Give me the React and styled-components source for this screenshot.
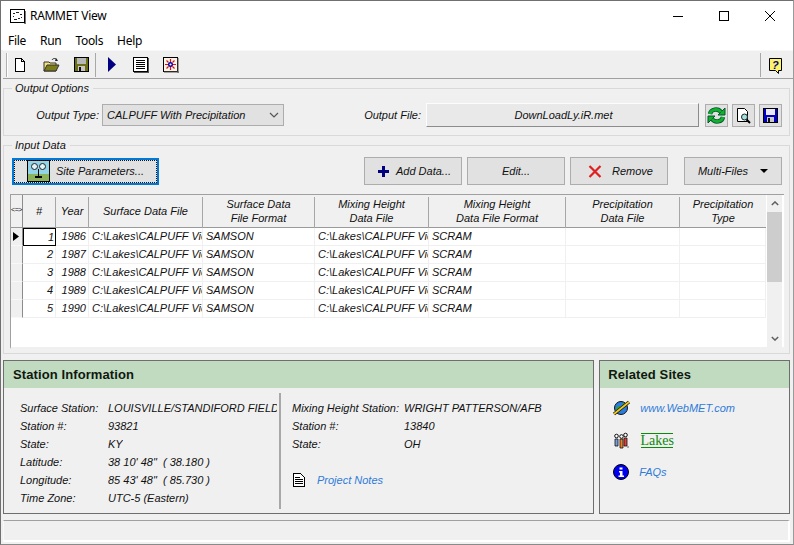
import React from 'react'
import styled, { createGlobalStyle } from 'styled-components'

const GlobalStyle = createGlobalStyle`
  html, body { margin: 0; padding: 0; background: #f0f0f0; }
  * { box-sizing: border-box; }
`

const Window = styled.div`
  width: 794px;
  height: 545px;
  display: flex;
  flex-direction: column;
  overflow: hidden;
  background: #f0f0f0;
  border: 1px solid #707070;
  border-right-color: #9a9a9a;
  border-bottom-color: #8a8a8a;
  font: italic 11px 'Liberation Sans', Arial, sans-serif;
  color: #111;
`

const TitleBar = styled.div`
  height: 30px;
  flex: none;
  display: flex;
  align-items: center;
  padding-left: 8px;
  background: #fff;
  font: normal 12px 'Noto Sans', sans-serif;
  letter-spacing: -0.3px;
  color: #000;
`

const TitleText = styled.span`
  margin: -2px 0 0 4px;
`

const WindowButtons = styled.div`
  margin-left: auto;
  display: flex;
  align-items: center;
`

const WindowButton = styled.div`
  width: 46px;
  height: 30px;
  display: flex;
  align-items: center;
  justify-content: center;
`

const MenuBar = styled.div`
  height: 19px;
  flex: none;
  display: flex;
  gap: 14px;
  padding-left: 7px;
  align-items: center;
  background: #fff;
  font: normal 12px 'Noto Sans', sans-serif;
  letter-spacing: -0.3px;
  color: #000;
`

const Toolbar = styled.div`
  height: 29px;
  flex: none;
  display: flex;
  align-items: center;
  margin-left: 2px;
  padding-top: 1px;
  background: #efefef;
  border-top: 1px solid #f8f8f8;
  border-bottom: 1px solid #a0a0a0;
`

const Grip = styled.div`
  width: 2px;
  height: 24px;
  margin: 0 4px 0 3px;
  background: #fff;
  border-left: 1px solid #b0b0b0;
`

const ToolIcon = styled.div`
  width: 16px;
  height: 16px;
  margin-right: ${p => p.$gap}px;
  display: flex;
`

const ToolSep = styled.div`
  width: 1px;
  height: 24px;
  flex: none;
  margin: 0 ${p => p.$after}px 0 ${p => (p.$push ? 'auto' : '5px')};
  background: #a8a8a8;
`

const Content = styled.div`
  flex: 1;
  display: flex;
  flex-direction: column;
  padding: 2px 3px 0 2px;
  min-height: 0;
`

const Group = styled.fieldset`
  margin: ${p => p.$top}px 0 0;
  padding: ${p => p.$pad};
  height: ${p => p.$h}px;
  flex: none;
  border: 1px solid #d9d9d9;
  min-width: 0;
`

const Legend = styled.legend`
  margin-left: 8px;
  padding: 0 4px 0 3px;
  font-size: 11px;
  line-height: 14px;
`

const OptionsRow = styled.div`
  display: flex;
  align-items: center;
  height: 24px;
`

const FieldLabel = styled.span`
  width: ${p => p.$w}px;
  margin-right: ${p => p.$gap}px;
  text-align: right;
  white-space: nowrap;
  flex: none;
`

const Select = styled.div`
  width: 182px;
  height: 22px;
  display: flex;
  align-items: center;
  justify-content: space-between;
  padding: 0 4px;
  margin-right: 80px;
  background: #e1e1e1;
  border: 1px solid #adadad;
  flex: none;
`

const FileField = styled.div`
  width: 273px;
  height: 24px;
  margin-right: 6px;
  padding-left: 2px;
  display: flex;
  align-items: center;
  justify-content: center;
  background: #e9e9e9;
  border: 1px solid;
  border-color: #fcfcfc #8c8c8c #8c8c8c #fcfcfc;
  flex: none;
`

const SquareButtons = styled.div`
  display: flex;
  gap: 4px;
`

const SquareButton = styled.div`
  width: 23px;
  height: 23px;
  display: flex;
  align-items: center;
  justify-content: center;
  background: #e1e1e1;
  border: 1px solid #adadad;
`

const ActionRow = styled.div`
  display: flex;
  align-items: center;
  height: 28px;
  padding-left: 8px;
`

const SiteButton = styled.div`
  width: 147px;
  height: 27px;
  margin-right: 205px;
  display: flex;
  align-items: center;
  padding-left: 13px;
  gap: 6px;
  background: #e1e1e1;
  border: 2px solid #0078d7;
  outline: 1px dotted #111;
  outline-offset: -3px;
`

const ActionButton = styled.div`
  width: 98px;
  height: 28px;
  margin-left: ${p => p.$left}px;
  padding-left: ${p => p.$shift || 0}px;
  display: flex;
  align-items: center;
  justify-content: center;
  gap: ${p => p.$gap || 0}px;
  background: #e1e1e1;
  border: 1px solid #adadad;
  white-space: nowrap;
`

const Table = styled.div`
  width: 774px;
  height: 155px;
  margin: 9px 0 0 6px;
  display: flex;
  background: #fff;
  border-top: 1px solid #a0a0a0;
  border-left: 1px solid #a0a0a0;
  border-bottom: 2px solid #f0f0f0;
`

const TableBody = styled.div`
  flex: 1;
  min-width: 0;
`

const colTemplate = '12px 33px 33px 114px 112px 114px 137px 114px 86px'

const HeaderRow = styled.div`
  display: grid;
  grid-template-columns: ${colTemplate};
  height: 33px;
  background: #f0f0f0;
  border-bottom: 1px solid #9a9a9a;
`

const HeaderCell = styled.div`
  display: flex;
  align-items: center;
  justify-content: center;
  text-align: center;
  line-height: 14px;
  padding-bottom: 3px;
  border-right: ${p => (p.$plain ? 'none' : '1px solid #a6a6a6')};
  margin: 2px 0 0;
`

const CornerCell = styled(HeaderCell)`
  margin: 0;
  border-right: 1px solid #8c8c8c;
  font-style: normal;
  font-size: 7px;
  letter-spacing: -0.5px;
  white-space: nowrap;
`

const DataRow = styled.div`
  display: grid;
  grid-template-columns: ${colTemplate};
  height: 18px;
`

const RowHead = styled.div`
  background: #f0f0f0;
  border-right: 1px solid #8c8c8c;
  border-bottom: 1px solid #f8f8f8;
  display: flex;
  align-items: center;
  padding-left: 2px;
`

const Cell = styled.div`
  overflow: hidden;
  white-space: nowrap;
  line-height: 17px;
  padding: 0 ${p => (p.$right ? '2px' : '0')} 0 ${p => (p.$right ? '0' : '3px')};
  text-align: ${p => (p.$right ? 'right' : 'left')};
  border-right: 1px solid #f0f0f0;
  border-bottom: 1px solid #f0f0f0;
`

const FocusCell = styled(Cell)`
  border: 1px solid #000;
  line-height: 16px;
  padding-right: 1px;
`

const ScrollBar = styled.div`
  width: 15px;
  margin: 0 2px 0 1px;
  display: flex;
  flex-direction: column;
  background: #f0f0f0;
`

const ScrollArrow = styled.div`
  height: 17px;
  flex: none;
  display: flex;
  align-items: center;
  justify-content: center;
`

const ScrollTrack = styled.div`
  flex: 1;
`

const ScrollThumb = styled.div`
  height: 70px;
  background: #cdcdcd;
`

const Panels = styled.div`
  display: flex;
  gap: 5px;
  margin-top: 6px;
  flex: none;
`

const Panel = styled.div`
  width: ${p => p.$w}px;
  height: 154px;
  display: flex;
  flex-direction: column;
  background: #f0f0f0;
  border: 1px solid #6e6e6e;
`

const PanelHeader = styled.div`
  height: 27px;
  flex: none;
  display: flex;
  align-items: center;
  padding: 0 0 1px ${p => p.$left}px;
  background: #c1dbc1;
  font: bold 13px 'Liberation Sans', Arial, sans-serif;
  letter-spacing: 0.1px;
  color: #10180f;
`

const StationBody = styled.div`
  flex: 1;
  display: flex;
  padding: 5px 0 4px;
`

const StationColumn = styled.div`
  width: ${p => p.$w}px;
  flex: none;
  overflow: hidden;
  padding: 6px 2px 0 ${p => p.$left}px;
  border-right: ${p => (p.$divider ? '2px solid #a8a8a8' : 'none')};
`

const InfoRow = styled.div`
  display: flex;
  height: 18px;
  line-height: 18px;
  white-space: nowrap;
`

const InfoLabel = styled.span`
  width: ${p => p.$w}px;
  flex: none;
`

const InfoValue = styled.span`
  overflow: hidden;
`

const NotesRow = styled.div`
  display: flex;
  align-items: center;
  height: 18px;
  margin-top: 18px;
  gap: 11px;
`

const LinkText = styled.span`
  color: #2f7bd9;
`

const SitesList = styled.div`
  display: flex;
  flex-direction: column;
  padding: 11px 0 0 13px;
`

const SiteRow = styled.div`
  display: flex;
  align-items: center;
  height: 18px;
  gap: 10px;
  margin-bottom: ${p => p.$after}px;
`

const LakesLogo = styled.span`
  width: 32px;
  height: 15px;
  margin-left: 1px;
  display: flex;
  align-items: center;
  justify-content: center;
  border-top: 1px solid #0b8a0b;
  border-bottom: 1px solid #0b8a0b;
  font: normal 14px 'Liberation Serif', serif;
  line-height: 13px;
  color: #0b8a0b;
`

const StatusBar = styled.div`
  height: 22px;
  flex: none;
  margin-top: 6px;
  background: #f0f0f0;
  border: 1px solid;
  border-color: #a0a0a0 #fff #fff #f8f8f8;
  border-width: 1px 2px 2px 1px;
`

const AppIcon = () => (
  <svg width="17" height="16" viewBox="0 0 17 16" shapeRendering="crispEdges">
    <rect x="1.5" y="1.5" width="14" height="13" fill="#fff" stroke="#000" />
    <path d="M15 15h2M16 3v12" stroke="#777" />
    <path d="M4 5h2M7 4h3M11 6h2M4 8h1M12 9h1M5 11h3M9 10h2" stroke="#222" />
  </svg>
)

const NewIcon = () => (
  <svg width="16" height="16" viewBox="0 0 16 16" shapeRendering="crispEdges">
    <path d="M3.5 1.5h6l3 3v10h-9z" fill="#fff" stroke="#000" />
    <path d="M9.5 1.5v3h3" fill="none" stroke="#000" />
  </svg>
)

const OpenIcon = () => (
  <svg width="17" height="16" viewBox="0 0 17 16" style={{ overflow: 'visible' }}>
    <path d="M1 5h5l1 1h6v8H1z" fill="#f5e27a" stroke="#333" />
    <path d="M1 14l3-6h12l-3 6z" fill="#7c7c1a" stroke="#333" />
    <path d="M9 3c1-2 4-2 5 0" fill="none" stroke="#222" />
    <path d="M13 1l2 3-3 0z" fill="#222" />
  </svg>
)

const SaveIcon = ({ body = '#6e6e14', win = '#b8b8b8' }) => (
  <svg width="15" height="15" viewBox="0 0 15 15" shapeRendering="crispEdges">
    <rect x="0" y="0" width="15" height="15" fill="#000" />
    <rect x="1" y="1" width="13" height="13" fill={body} />
    <rect x="3" y="1" width="9" height="6" fill={win} />
    <rect x="4" y="9" width="7" height="5" fill="#c8c8c8" />
    <rect x="5" y="10" width="2" height="4" fill="#111" />
  </svg>
)

const RunIcon = () => (
  <svg width="9" height="15" viewBox="0 0 9 15">
    <path d="M0 0l8 7.5L0 15z" fill="#000080" />
  </svg>
)

const ListIcon = () => (
  <svg width="16" height="16" viewBox="0 0 16 16" shapeRendering="crispEdges">
    <rect x="0.5" y="0.5" width="14" height="14" fill="#fff" stroke="#000" />
    <path d="M15 1v15M1 15h15" stroke="#555" />
    <path d="M3 3.5h9M3 5.5h9M3 7.5h9M3 9.5h9M3 11.5h9" stroke="#000" />
  </svg>
)

const BurstIcon = () => (
  <svg width="16" height="16" viewBox="0 0 16 16">
    <rect x="0.5" y="0.5" width="14" height="14" fill="#fff4e8" stroke="#000" />
    <path d="M15 1v15M1 15h15" stroke="#555" />
    <path d="M2 7.5h3M10 7.5h3M7.5 2v3M7.5 10v3M3.5 3.5l2 2M11.5 3.5l-2 2M3.5 11.5l2-2M11.5 11.5l-2-2" stroke="#e01010" strokeWidth="1.2" />
    <circle cx="7.5" cy="7.5" r="1.8" fill="#fff" stroke="#0000a8" strokeWidth="1.4" />
  </svg>
)

const HelpIcon = () => (
  <svg width="16" height="18" viewBox="0 0 16 18">
    <path d="M1.5 1.5h12v12h-3v3l-3-3h-6z" fill="#fff36a" stroke="#000" />
    <text x="4" y="11.5" fontSize="11" fontWeight="700" fontFamily="Liberation Sans" fill="#000080">?</text>
  </svg>
)

const TreeIcon = () => (
  <svg width="23" height="22" viewBox="0 0 23 22" shapeRendering="crispEdges">
    <rect x="0.5" y="0.5" width="22" height="21" fill="#93d3e8" stroke="#000" />
    <rect x="1" y="14" width="21" height="7" fill="#8db35a" />
    <circle cx="7.5" cy="6.5" r="3" fill="#dff2f8" stroke="#222" shapeRendering="auto" />
    <circle cx="15.5" cy="6.5" r="3" fill="#dff2f8" stroke="#222" shapeRendering="auto" />
    <path d="M11 9h1v7h-1zM8 16h7v2H8z" fill="#000" />
  </svg>
)

const RefreshIcon = () => (
  <svg width="19" height="19" viewBox="0 0 19 19">
    <path d="M3 8C4 3 11 2 14 6" fill="none" stroke="#04562a" strokeWidth="4.4" />
    <path d="M16 11C15 16 8 17 5 13" fill="none" stroke="#04562a" strokeWidth="4.4" />
    <path d="M11 9h7V2z" fill="#12b030" stroke="#04562a" />
    <path d="M8 10H1v7z" fill="#12b030" stroke="#04562a" />
    <path d="M3 8C4 3 11 2 14 6" fill="none" stroke="#12b030" strokeWidth="2.8" />
    <path d="M16 11C15 16 8 17 5 13" fill="none" stroke="#12b030" strokeWidth="2.8" />
  </svg>
)

const PreviewIcon = () => (
  <svg width="17" height="17" viewBox="0 0 17 17">
    <path d="M2.5 1.5h7l3 3v10h-10z" fill="#fff" stroke="#000" />
    <circle cx="9.5" cy="10" r="3" fill="#9fe0e0" stroke="#222" />
    <path d="M11.5 12.5l3.5 3.5" stroke="#000" strokeWidth="2" />
  </svg>
)

const PlusIcon = () => (
  <svg width="11" height="11" viewBox="0 0 11 11" shapeRendering="crispEdges">
    <path d="M4 0h3v4h4v3H7v4H4V7H0V4h4z" fill="#000080" />
  </svg>
)

const CrossIcon = () => (
  <svg width="14" height="13" viewBox="0 0 14 13">
    <path d="M1.5 1l11 11M12.5 1l-11 11" stroke="#e02020" strokeWidth="2.2" />
  </svg>
)

const Chevron = ({ up, color = '#555', width = 10, height = 6, weight = 1.2 }) => (
  <svg width={width} height={height} viewBox="0 0 10 6">
    <path d={up ? 'M1 5l4-4 4 4' : 'M1 1l4 4 4-4'} fill="none" stroke={color} strokeWidth={weight} />
  </svg>
)

const Caret = () => (
  <svg width="8" height="4" viewBox="0 0 8 4">
    <path d="M0 0h8L4 4z" fill="#000" />
  </svg>
)

const RowArrow = () => (
  <svg width="6" height="9" viewBox="0 0 6 9">
    <path d="M0 0l6 4.5L0 9z" fill="#000" />
  </svg>
)

const NotesIcon = () => (
  <svg width="14" height="14" viewBox="0 0 14 14" shapeRendering="crispEdges">
    <path d="M1.5 0.5h7l4 4v9h-11z" fill="#fff" stroke="#000" />
    <path d="M3 4.5h5M3 6.5h8M3 8.5h8M3 10.5h8" stroke="#000" />
  </svg>
)

const GlobeIcon = () => (
  <svg width="17" height="16" viewBox="0 0 17 16">
    <circle cx="8" cy="8" r="6.5" fill="#2a7de0" stroke="#111" />
    <path d="M3 9c1-3 4-4 5-2s-1 6-3 5zM9 3c2 0 4 1 4 3s-2 1-3 0z" fill="#35a028" />
    <path d="M1 14L16 2" stroke="#111" strokeWidth="3.2" />
    <path d="M1 14L16 2" stroke="#f4c81c" strokeWidth="1.8" />
  </svg>
)

const PeopleIcon = () => (
  <svg width="17" height="17" viewBox="0 0 17 17">
    <path d="M2 14V7h3v7z" stroke="#111" strokeWidth="0.8" fill="#7a9ce0" />
    <path d="M7 16V7h3v9z" stroke="#111" strokeWidth="0.8" fill="#f08020" />
    <path d="M11 14V6h3v8z" stroke="#111" strokeWidth="0.8" fill="#e04040" />
    <circle cx="3.5" cy="4" r="1.8" fill="#fff" stroke="#111" />
    <circle cx="8.5" cy="4.5" r="1.8" fill="#fff" stroke="#111" />
    <circle cx="12.5" cy="3" r="1.8" fill="#fff" stroke="#111" />
    <path d="M14 15h2" stroke="#aaa" strokeWidth="2" />
  </svg>
)

const InfoIcon = () => (
  <svg width="16" height="16" viewBox="0 0 16 16">
    <circle cx="8" cy="8" r="7.5" fill="#0000f0" stroke="#000" />
    <path d="M6.5 3.5h3v2h-3zM6 7h3.5v4.500H11V13H5.500v-1.500H7V8.400H6z" fill="#fff" />
  </svg>
)

const headers = [
  ['#', false],
  ['Year', false],
  ['Surface Data File', false],
  ['Surface Data\nFile Format', false],
  ['Mixing Height\nData File', false],
  ['Mixing Height\nData File Format', false],
  ['Precipitation\nData File', false],
  ['Precipitation\nType', true],
]

const rows = [
  [1, 1986],
  [2, 1987],
  [3, 1988],
  [4, 1989],
  [5, 1990],
]

const filePath = 'C:\\Lakes\\CALPUFF View\\Data'

const surfaceInfo = [
  ['Surface Station:', 'LOUISVILLE/STANDIFORD FIELD'],
  ['Station #:', '93821'],
  ['State:', 'KY'],
  ['Latitude:', '38 10\' 48"\u00a0\u00a0( 38.180 )'],
  ['Longitude:', '85 43\' 48"\u00a0\u00a0( 85.730 )'],
  ['Time Zone:', 'UTC-5 (Eastern)'],
]

const mixingInfo = [
  ['Mixing Height Station:', 'WRIGHT PATTERSON/AFB'],
  ['Station #:', '13840'],
  ['State:', 'OH'],
]

const multiline = text => text.split('\n').map(line => <div key={line}>{line}</div>)

const App = () => (
  <Window>
    <GlobalStyle />

    <TitleBar>
      <AppIcon />
      <TitleText>RAMMET View</TitleText>
      <WindowButtons>
        <WindowButton>
          <svg width="10" height="10" viewBox="0 0 10 10" shapeRendering="crispEdges"><path d="M0 5.5h10" stroke="#000" /></svg>
        </WindowButton>
        <WindowButton>
          <svg width="10" height="10" viewBox="0 0 10 10" shapeRendering="crispEdges"><rect x="0.5" y="0.5" width="9" height="9" fill="none" stroke="#000" /></svg>
        </WindowButton>
        <WindowButton>
          <svg width="10" height="10" viewBox="0 0 10 10"><path d="M0 0l10 10M10 0L0 10" stroke="#000" /></svg>
        </WindowButton>
      </WindowButtons>
    </TitleBar>

    <MenuBar>
      <span>File</span>
      <span>Run</span>
      <span>Tools</span>
      <span>Help</span>
    </MenuBar>

    <Toolbar>
      <Grip />
      <ToolIcon $gap={15}><NewIcon /></ToolIcon>
      <ToolIcon $gap={15}><OpenIcon /></ToolIcon>
      <ToolIcon $gap={0}><SaveIcon /></ToolIcon>
      <ToolSep $after={12} />
      <ToolIcon $gap={9}><RunIcon /></ToolIcon>
      <ToolIcon $gap={14}><ListIcon /></ToolIcon>
      <ToolIcon $gap={0}><BurstIcon /></ToolIcon>
      <ToolSep $push $after={7} />
      <ToolIcon $gap={9}><HelpIcon /></ToolIcon>
    </Toolbar>

    <Content>
      <Group $h={55} $top={0} $pad="8px 0 0 0">
        <Legend>Output Options</Legend>
        <OptionsRow>
          <FieldLabel $w={95} $gap={3}>Output Type:</FieldLabel>
          <Select>
            CALPUFF With Precipitation
            <Chevron />
          </Select>
          <FieldLabel $w={57} $gap={5}>Output File:</FieldLabel>
          <FileField>DownLoadLy.iR.met</FileField>
          <SquareButtons>
            <SquareButton><RefreshIcon /></SquareButton>
            <SquareButton><PreviewIcon /></SquareButton>
            <SquareButton><SaveIcon body="#0000c8" win="#e8e8f8" /></SquareButton>
          </SquareButtons>
        </OptionsRow>
      </Group>

      <Group $h={216} $top={2} $pad="5px 0 0 0">
        <Legend>Input Data</Legend>
        <ActionRow>
          <SiteButton>
            <TreeIcon />
            Site Parameters...
          </SiteButton>
          <ActionButton $left={0} $gap={7} $shift={3}><PlusIcon />Add Data...</ActionButton>
          <ActionButton $left={5}>Edit...</ActionButton>
          <ActionButton $left={5} $gap={10} $shift={3}><CrossIcon />Remove</ActionButton>
          <ActionButton $left={16} $gap={12}>Multi-Files<Caret /></ActionButton>
        </ActionRow>

        <Table>
          <TableBody>
            <HeaderRow>
              <CornerCell>{'<=>'}</CornerCell>
              {headers.map(([label, plain]) => (
                <HeaderCell key={label} $plain={plain}>
                  <div>{multiline(label)}</div>
                </HeaderCell>
              ))}
            </HeaderRow>
            {rows.map(([num, year], i) => (
              <DataRow key={num}>
                <RowHead>{i === 0 && <RowArrow />}</RowHead>
                {i === 0 ? <FocusCell $right>{num}</FocusCell> : <Cell $right>{num}</Cell>}
                <Cell $right>{year}</Cell>
                <Cell>{filePath}</Cell>
                <Cell>SAMSON</Cell>
                <Cell>{filePath}</Cell>
                <Cell>SCRAM</Cell>
                <Cell />
                <Cell />
              </DataRow>
            ))}
          </TableBody>
          <ScrollBar>
            <ScrollArrow><Chevron up color="#606060" width={8} height={5} weight={1.8} /></ScrollArrow>
            <ScrollTrack><ScrollThumb /></ScrollTrack>
            <ScrollArrow><Chevron color="#606060" width={8} height={5} weight={1.8} /></ScrollArrow>
          </ScrollBar>
        </Table>
      </Group>

      <Panels>
        <Panel $w={592}>
          <PanelHeader $left={9}>Station Information</PanelHeader>
          <StationBody>
            <StationColumn $w={277} $left={16} $divider>
              {surfaceInfo.map(([label, value]) => (
                <InfoRow key={label}>
                  <InfoLabel $w={88}>{label}</InfoLabel>
                  <InfoValue>{value}</InfoValue>
                </InfoRow>
              ))}
            </StationColumn>
            <StationColumn $w={300} $left={11}>
              {mixingInfo.map(([label, value]) => (
                <InfoRow key={value}>
                  <InfoLabel $w={112}>{label}</InfoLabel>
                  <InfoValue>{value}</InfoValue>
                </InfoRow>
              ))}
              <NotesRow>
                <NotesIcon />
                <LinkText>Project Notes</LinkText>
              </NotesRow>
            </StationColumn>
          </StationBody>
        </Panel>

        <Panel $w={191}>
          <PanelHeader $left={8}>Related Sites</PanelHeader>
          <SitesList>
            <SiteRow $after={14}><GlobeIcon /><LinkText>www.WebMET.com</LinkText></SiteRow>
            <SiteRow $after={14}><PeopleIcon /><LakesLogo>Lakes</LakesLogo></SiteRow>
            <SiteRow $after={0}><InfoIcon /><LinkText>FAQs</LinkText></SiteRow>
          </SitesList>
        </Panel>
      </Panels>

      <StatusBar />
    </Content>
  </Window>
)

export default App
